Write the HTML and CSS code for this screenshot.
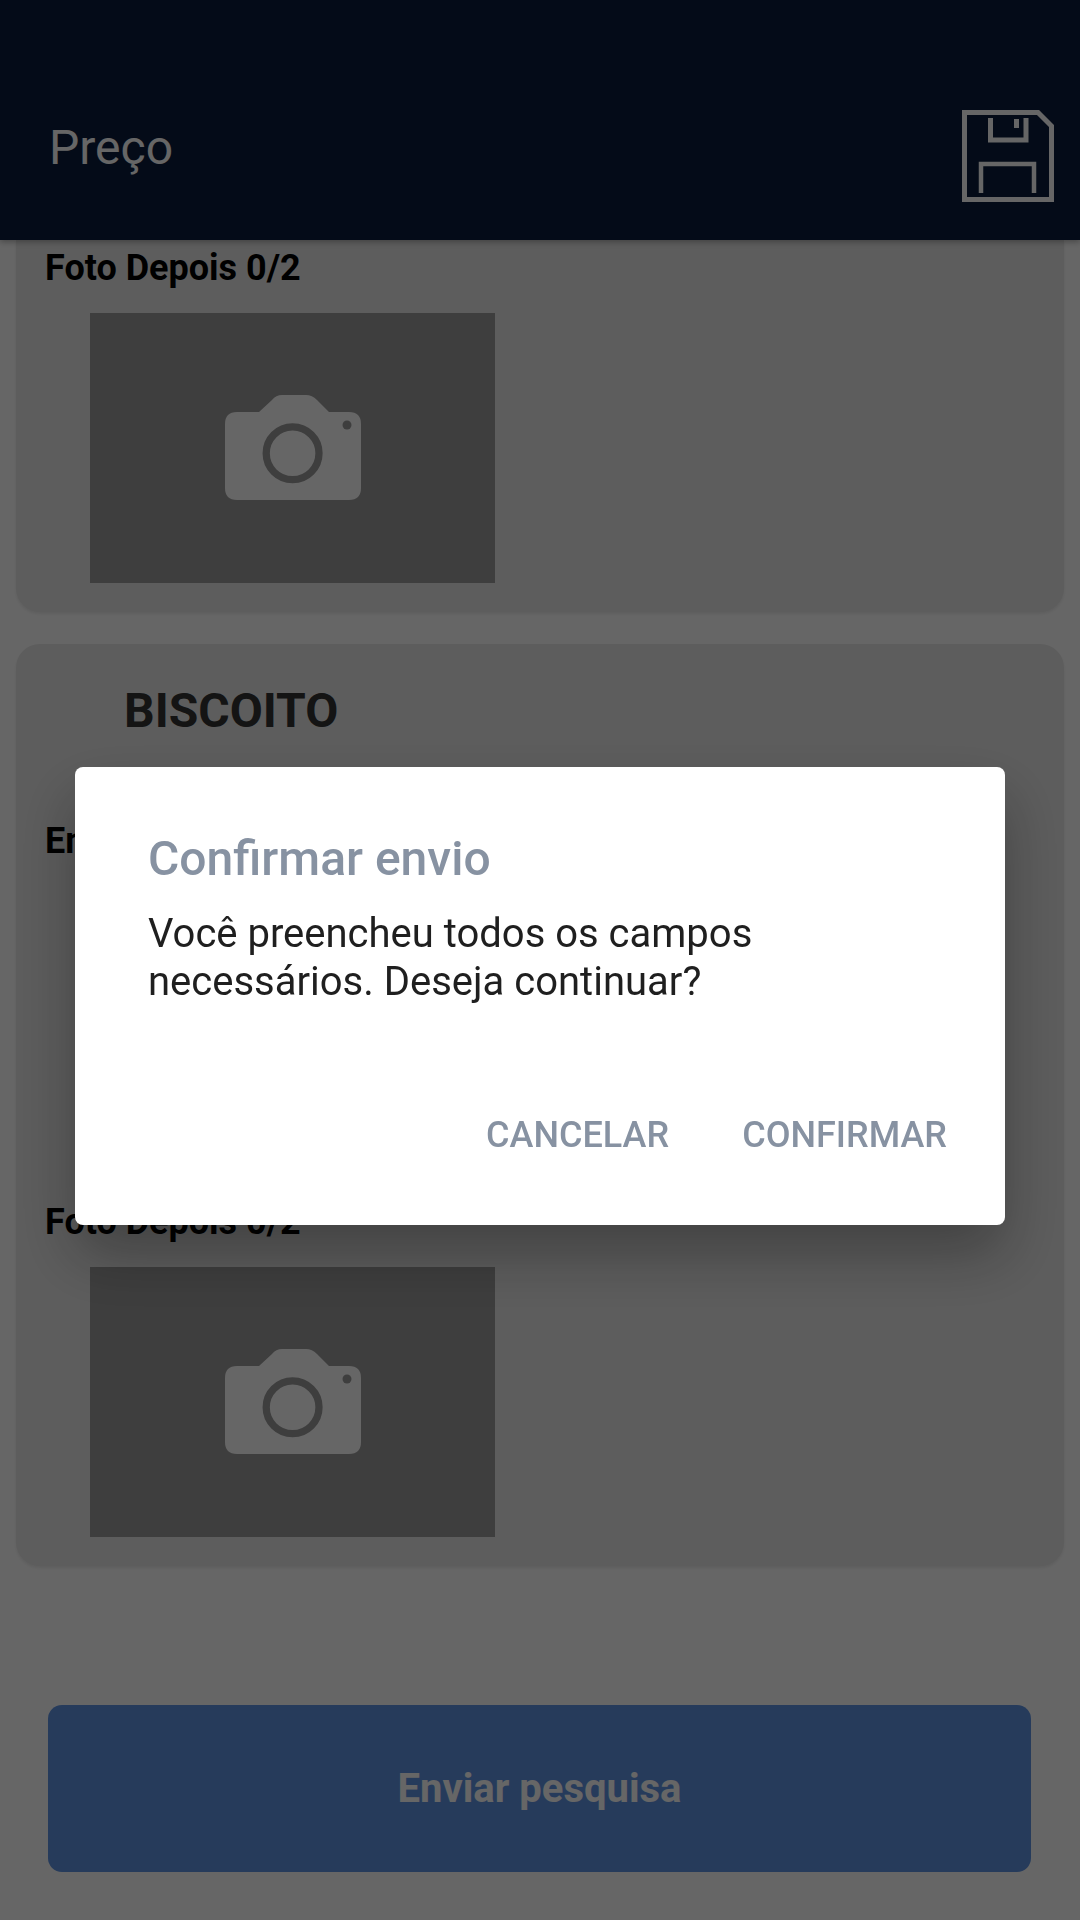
FILE: index.html
```html
<!DOCTYPE html>
<html lang="pt-BR">
<head>
    <meta charset="UTF-8">
    <meta name="viewport" content="width=device-width, initial-scale=1.0">
    <title>Preço</title>
    <link rel="stylesheet" href="styles.css">
</head>
<body>
    <header class="topbar">
        <span class="topbar-title">Preço</span>
        <svg class="save-icon" viewBox="0 0 92 92">
            <path d="M2.5 2.5H76L89.5 16V89.5H2.5Z"/>
            <path d="M28.5 8V30H64V8"/>
            <path d="M54.5 9V18"/>
            <path class="thin" d="M19 83V54H72V83"/>
        </svg>
    </header>

    <main class="content">
        <section class="card card-cut">
            <h3 class="photo-label">Foto Depois 0/2</h3>
            <div class="photo-box">
                <svg class="camera" viewBox="0 0 136 106">
                    <path class="camera-body" d="M12 17H34L47 5Q51 0 57 0H81Q87 0 92 5L104 17H124Q136 17 136 29V93Q136 105 124 105H12Q0 105 0 93V29Q0 17 12 17Z"/>
                    <circle class="camera-ring" cx="67.6" cy="58.3" r="26.4"/>
                    <circle class="camera-dot" cx="122" cy="30" r="4.5"/>
                </svg>
            </div>
        </section>

        <section class="card">
            <h2 class="card-title">BISCOITO</h2>
            <h3 class="photo-label first">Em Loja 0/2</h3>
            <div class="photo-box">
                <svg class="camera" viewBox="0 0 136 106">
                    <path class="camera-body" d="M12 17H34L47 5Q51 0 57 0H81Q87 0 92 5L104 17H124Q136 17 136 29V93Q136 105 124 105H12Q0 105 0 93V29Q0 17 12 17Z"/>
                    <circle class="camera-ring" cx="67.6" cy="58.3" r="26.4"/>
                    <circle class="camera-dot" cx="122" cy="30" r="4.5"/>
                </svg>
            </div>
            <h3 class="photo-label next">Foto Depois 0/2</h3>
            <div class="photo-box">
                <svg class="camera" viewBox="0 0 136 106">
                    <path class="camera-body" d="M12 17H34L47 5Q51 0 57 0H81Q87 0 92 5L104 17H124Q136 17 136 29V93Q136 105 124 105H12Q0 105 0 93V29Q0 17 12 17Z"/>
                    <circle class="camera-ring" cx="67.6" cy="58.3" r="26.4"/>
                    <circle class="camera-dot" cx="122" cy="30" r="4.5"/>
                </svg>
            </div>
        </section>

        <button class="send-btn">Enviar pesquisa</button>
    </main>

    <div class="overlay">
        <div class="dialog">
            <h2 class="dialog-title">Confirmar envio</h2>
            <p class="dialog-text">Você preencheu todos os campos necessários. Deseja continuar?</p>
            <div class="dialog-actions">
                <button class="dialog-btn">CANCELAR</button>
                <button class="dialog-btn">CONFIRMAR</button>
            </div>
        </div>
    </div>
</body>
</html>
```

FILE: styles.css
```css
* {
    box-sizing: border-box;
}
body {
    margin: 0;
    width: 1080px;
    height: 1920px;
    overflow: hidden;
    background-color: #ffffff;
    font-family: Roboto, "Liberation Sans", sans-serif;
}
h2, h3, p {
    margin: 0;
}
.topbar {
    position: relative;
    z-index: 2;
    height: 240px;
    display: flex;
    justify-content: space-between;
    padding: 110px 26px 0 49px;
    background-color: #0a1c3c;
    box-shadow: 0 2px 6px rgba(0, 0, 0, 0.3);
}
.topbar-title {
    font-size: 48px;
    line-height: 60px;
    margin-top: 8px;
    color: #ffffff;
}
.save-icon {
    width: 92px;
    height: 92px;
    fill: none;
    stroke: #ffffff;
    stroke-width: 5;
}
.save-icon .thin {
    stroke-width: 4.5;
}
.content {
    display: flex;
    flex-direction: column;
    padding: 0 16px;
}
.card {
    background-color: #e8e8e8;
    border-radius: 24px;
    margin-top: 32px;
    padding: 39px 29px 29px;
    box-shadow: 0 2px 3px rgba(0, 0, 0, 0.08);
}
.card-cut {
    margin-top: 0;
    padding-top: 4px;
    border-radius: 0 0 24px 24px;
}
.card-title {
    margin-left: 79px;
    font-size: 48px;
    line-height: 56px;
    font-weight: 700;
    color: #333333;
}
.photo-label {
    font-size: 36px;
    line-height: 48px;
    font-weight: 700;
    color: #000000;
}
.photo-label.first {
    margin-top: 78px;
}
.photo-label.next {
    margin-top: 42px;
}
.photo-box {
    width: 405px;
    height: 270px;
    margin: 21px 0 0 45px;
    display: flex;
    align-items: center;
    justify-content: center;
    background-color: #9b9b9b;
}
.camera {
    width: 136px;
    height: 106px;
}
.camera-body {
    fill: #ffffff;
}
.camera-ring {
    fill: none;
    stroke: #9b9b9b;
    stroke-width: 7.3;
}
.camera-dot {
    fill: #9b9b9b;
}
.send-btn {
    height: 167px;
    margin: 139px 33px 0 32px;
    border: none;
    border-radius: 14px;
    background-color: #5f94e4;
    color: #ffffff;
    font-family: inherit;
    font-size: 40px;
    font-weight: 700;
}
.overlay {
    position: fixed;
    inset: 0;
    z-index: 3;
    display: flex;
    align-items: center;
    justify-content: center;
    padding-top: 72px;
    background-color: rgba(0, 0, 0, 0.6);
}
.dialog {
    width: 930px;
    height: 458px;
    display: flex;
    flex-direction: column;
    padding: 60px 58px 0 73px;
    background-color: #ffffff;
    border-radius: 8px;
    box-shadow: 0 30px 60px rgba(0, 0, 0, 0.3);
}
.dialog-title {
    font-size: 48px;
    line-height: 64px;
    font-weight: 500;
    color: #8792a2;
}
.dialog-text {
    margin-top: 19px;
    font-size: 40px;
    line-height: 48px;
    color: #1f1f1f;
}
.dialog-actions {
    display: flex;
    justify-content: flex-end;
    gap: 73px;
    margin-top: 105px;
}
.dialog-btn {
    padding: 0;
    border: none;
    background: none;
    color: #8792a2;
    font-family: inherit;
    font-size: 36px;
    line-height: 48px;
    font-weight: 500;
}
```
